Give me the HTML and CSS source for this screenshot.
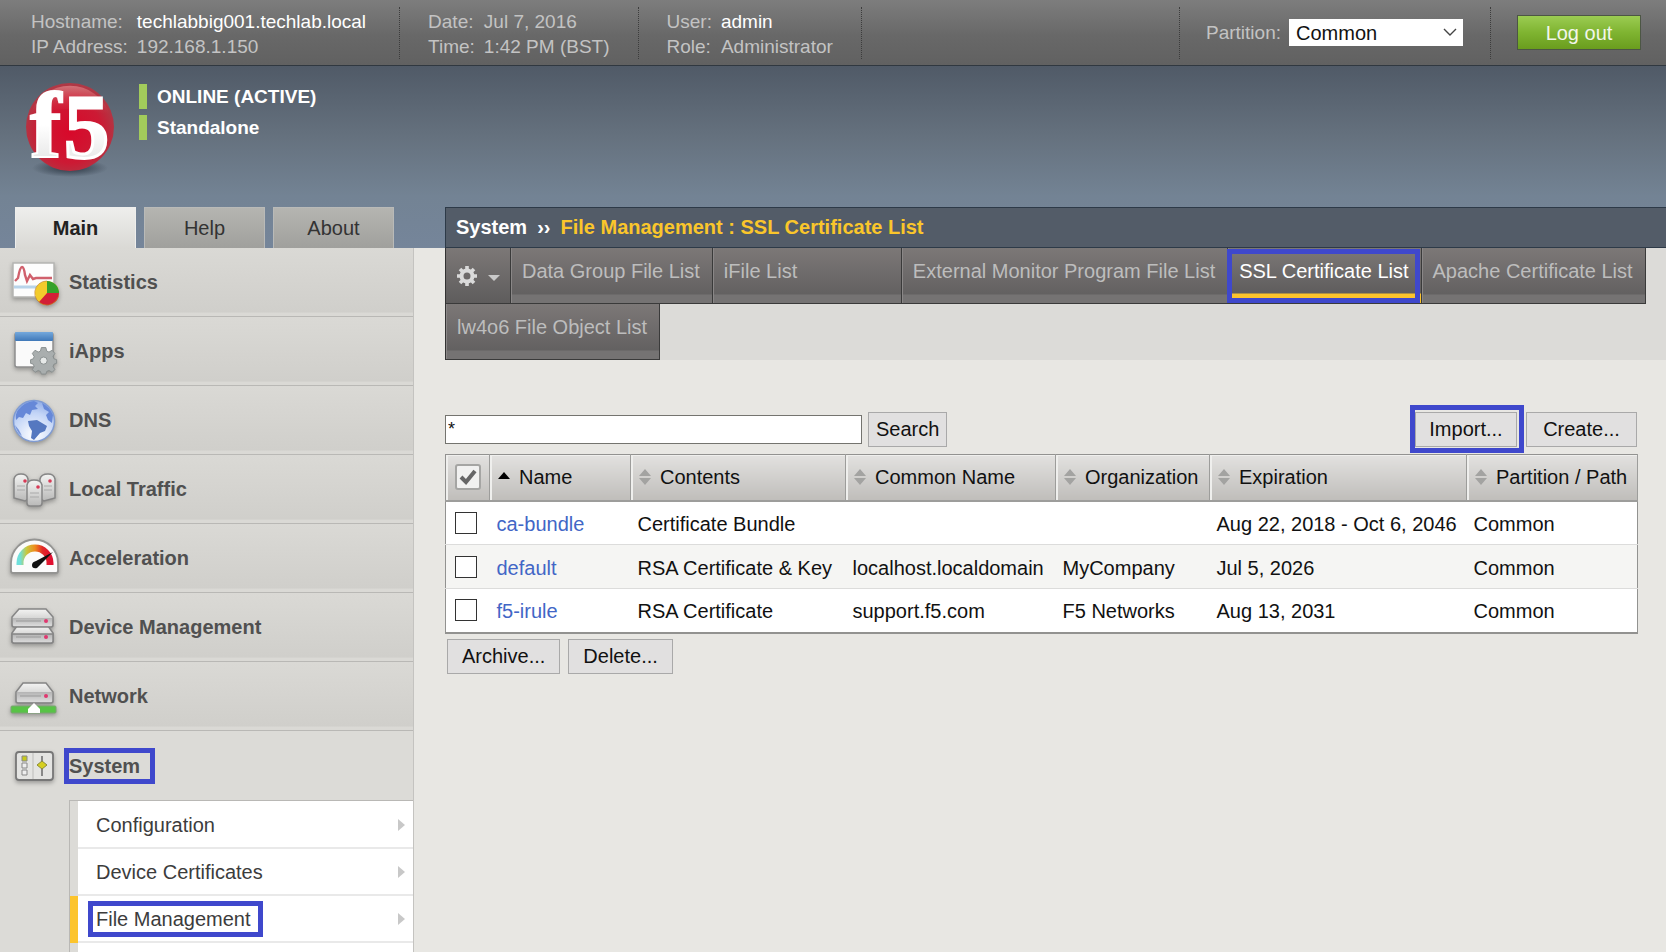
FILE: index.html
```html
<!DOCTYPE html>
<html lang="en">
<head>
<meta charset="utf-8">
<title>SSL Certificate List</title>
<link rel="stylesheet" href="styles.css">
</head>
<body>
<svg class="defs" width="0" height="0" aria-hidden="true">
  <defs>
    <linearGradient id="metal" x1="0" y1="0" x2="0" y2="1"><stop offset="0" stop-color="#f4f4f3"/><stop offset="1" stop-color="#b9b9b8"/></linearGradient>
    <linearGradient id="metalDark" x1="0" y1="0" x2="0" y2="1"><stop offset="0" stop-color="#b4b4b4"/><stop offset="1" stop-color="#dcdcdc"/></linearGradient>
    <linearGradient id="blueBar" x1="0" y1="0" x2="0" y2="1"><stop offset="0" stop-color="#74a8dc"/><stop offset="1" stop-color="#3f78b8"/></linearGradient>
    <linearGradient id="gauge" x1="0" y1="0" x2="1" y2="0"><stop offset="0" stop-color="#6fe0dc"/><stop offset=".22" stop-color="#c8c840"/><stop offset=".5" stop-color="#ef8a1c"/><stop offset=".75" stop-color="#e02a28"/><stop offset="1" stop-color="#e01030"/></linearGradient>
    <radialGradient id="globe" cx=".5" cy=".85" r=".9"><stop offset="0" stop-color="#ffffff"/><stop offset=".6" stop-color="#c3d5f7"/><stop offset="1" stop-color="#86a4e4"/></radialGradient>
    <radialGradient id="ball" cx=".5" cy=".55" r=".6"><stop offset="0" stop-color="#d8082a"/><stop offset=".6" stop-color="#cc1a34"/><stop offset="1" stop-color="#a4444c"/></radialGradient>
    <linearGradient id="gloss" x1="0" y1="0" x2="0" y2="1"><stop offset="0" stop-color="#e89a9a" stop-opacity=".6"/><stop offset="1" stop-color="#e03040" stop-opacity="0"/></linearGradient>
    <linearGradient id="letters" x1="0" y1="0" x2="0" y2="1"><stop offset=".5" stop-color="#ffffff"/><stop offset="1" stop-color="#dcdcdc"/></linearGradient>
    <radialGradient id="shade"><stop offset="0" stop-color="#222c38" stop-opacity=".9"/><stop offset="1" stop-color="#222c38" stop-opacity="0"/></radialGradient>
    <symbol id="sorter" viewBox="0 0 14 18"><path d="M7 1L13 8H1z M7 17L13 10H1z" fill="#a3a3a1"/></symbol>
  </defs>
</svg>

<header class="topbar">
  <dl class="info">
    <dt>Hostname:</dt><dd class="strong">techlabbig001.techlab.local</dd>
    <dt>IP Address:</dt><dd>192.168.1.150</dd>
  </dl>
  <dl class="info">
    <dt>Date:</dt><dd>Jul 7, 2016</dd>
    <dt>Time:</dt><dd>1:42 PM (BST)</dd>
  </dl>
  <dl class="info">
    <dt>User:</dt><dd class="strong">admin</dd>
    <dt>Role:</dt><dd>Administrator</dd>
  </dl>
  <div class="partition">
    <label for="partition">Partition:</label>
    <span class="select-wrap">
      <select id="partition"><option>Common</option></select>
      <svg class="chevron" width="14" height="9" viewBox="0 0 14 9"><path d="M1 1L7 7L13 1" fill="none" stroke="#444" stroke-width="1.4"/></svg>
    </span>
  </div>
  <div class="session"><button class="logout" type="button">Log out</button></div>
</header>

<div class="page">
  <aside class="side">
    <div class="brand">
      <svg class="logo" width="96" height="126" viewBox="0 -15 96 126" role="img" aria-label="f5">
        <ellipse cx="46" cy="87" rx="38" ry="9" fill="url(#shade)"/>
        <circle cx="46" cy="46" r="44" fill="url(#ball)"/>
        <path d="M6 34A42 42 0 0 1 86 34Q46 22 6 34z" fill="url(#gloss)"/>
        <g font-family="Liberation Serif, serif" font-weight="bold" fill="url(#letters)" stroke="#fff">
          <text x="6" y="76" font-size="94" stroke-width="2">f</text>
          <text x="40" y="77" font-size="90" stroke-width="3">5</text>
        </g>
      </svg>
      <div class="status">
        <p>ONLINE (ACTIVE)</p>
        <p>Standalone</p>
      </div>
    </div>
    <div class="side-tabs">
      <button class="side-tab current" type="button">Main</button>
      <button class="side-tab" type="button">Help</button>
      <button class="side-tab" type="button">About</button>
    </div>
    <nav class="menu">
      <a class="menu-row" href="#statistics">
        <svg class="ico" viewBox="0 0 48 48"><path d="M3 5H44V39H3z" fill="#fdfdfd" stroke="#b5b5b3" stroke-width="1.5"/><path d="M4 29H43" stroke="#b8d4ea" stroke-width="3"/><path d="M5 23L8 20Q10 9 12 9Q14 9 15 17L17 23L20 17L23 21L26 20H42" fill="none" stroke="#d0606c" stroke-width="2.4"/><circle cx="37" cy="35" r="12" fill="#f3cb2c"/><path d="M37 35V23A12 12 0 0 1 49 35z" fill="#35a12b"/><path d="M37 35H49A12 12 0 0 1 29 44z" fill="#d31f37"/><path d="M37 23A12 12 0 1 0 48 39" fill="none" stroke="#c07a20" stroke-width="1" opacity=".6"/></svg>
        <span>Statistics</span></a>
      <a class="menu-row" href="#iapps">
        <svg class="ico" viewBox="0 0 48 48"><rect x="5" y="6" width="38" height="34" rx="2" fill="#fafafa" stroke="#8e8e8e" stroke-width="1.5"/><rect x="5" y="5" width="38" height="9" rx="1" fill="url(#blueBar)"/><g transform="translate(3 3) scale(.9)" fill="#a9aeae" stroke="#858b8b" stroke-width="1"><path d="M31.5 19.500h5l1 4 2.500 1 3.500-2 3 3.500-2 3.500 1 2.500 3 1v4l-3 1-1 2.500 2 3.500-3 3-3.500-2-2.500 1-1 3h-5l-1-3-2.500-1-3.500 2-3-3 2-3.500-1-2.500-3-1v-4l3-1 1-2.500-2-3.500 3-3.500 3.500 2 2.500-1z"/><circle cx="34" cy="34" r="4" fill="#e6e9e8"/></g></svg>
        <span>iApps</span></a>
      <a class="menu-row" href="#dns">
        <svg class="ico" viewBox="0 0 48 48"><circle cx="24" cy="25" r="20.500" fill="url(#globe)" stroke="#7f9bd2" stroke-width="1.500"/><path d="M8 14Q14 6 24 5L28 7L25 10L28 13L22 14L20 19L16 17L13 22L9 21L6 24Q5 18 8 14z" fill="#6688d8"/><path d="M18 25L27 24L37 30L35 35L30 37L24 44L21 42L22 35L19 30z" fill="#5578c0"/><path d="M32 7Q40 11 43 19L42 27L38 24L36 19L39 16L34 13z" fill="#6688d8"/><path d="M5 29Q7 37 12 40Q9 33 5 29z" fill="#7896dc"/></svg>
        <span>DNS</span></a>
      <a class="menu-row" href="#local">
        <svg class="ico" viewBox="0 0 48 48"><g stroke="#868686" stroke-width="1.500"><path d="M4 14Q5 9 11 9Q17 9 18 14V34L15 36L4 33z" fill="url(#metal)"/><path d="M45 14Q44 9 38 9Q31 9 30 14V34L34 36L45 33z" fill="url(#metal)"/><path d="M17 20Q18 15 24 15Q31 15 32 20V38Q32 41 29 41H20Q17 41 17 38z" fill="url(#metal)"/></g><path d="M7 21H15M7 25H15M34 21H42M34 25H42M20 28H29M20 32H29" stroke="#aaa"/><g fill="#d83a56"><circle cx="15" cy="16" r="1.800"/><circle cx="40" cy="16" r="1.800"/><circle cx="28" cy="22" r="1.800"/></g></svg>
        <span>Local Traffic</span></a>
      <a class="menu-row" href="#acceleration">
        <svg class="ico" viewBox="0 0 48 48"><path d="M1 37V29A23.500 23.500 0 0 1 48 29V37Q48 39 46 39H3Q1 39 1 37z" fill="#fbfbfb" stroke="#949492" stroke-width="1.800"/><path d="M10 31V29A15 15 0 0 1 40 29V31" fill="none" stroke="url(#gauge)" stroke-width="7"/><path d="M43 18L27 34Q22 35 22 31Q22 28 26 27z" fill="#111"/></svg>
        <span>Acceleration</span></a>
      <a class="menu-row" href="#device">
        <svg class="ico" viewBox="0 0 48 48"><g stroke="#858585" stroke-width="1.500"><path d="M2 30L7 23H38L43 30V38Q43 40 41 40H4Q2 40 2 38z" fill="url(#metal)"/><path d="M2 31H43V38Q43 40 41 40H4Q2 40 2 38z" fill="url(#metalDark)"/><path d="M9 6H36L43 14V22Q43 24 41 24H4Q2 24 2 22V14z" fill="url(#metal)"/></g><path d="M3 15H42V22Q42 23 41 23H4Q3 23 3 22z" fill="url(#metalDark)"/><path d="M6 18H31M6 34H31" stroke="#999"/><circle cx="36" cy="18" r="2" fill="#e03870"/><circle cx="36" cy="34" r="2" fill="#e03870"/></svg>
        <span>Device Management</span></a>
      <a class="menu-row" href="#network">
        <svg class="ico" viewBox="0 0 48 48"><path d="M13 11H36L43 20V29Q43 31 41 31H8Q6 31 6 29V20z" fill="url(#metal)" stroke="#858585" stroke-width="1.500"/><path d="M7 20H42V29Q42 30 41 30H8Q7 30 7 29z" fill="url(#metalDark)"/><path d="M10 24H31" stroke="#999"/><circle cx="36" cy="24" r="2" fill="#e03870"/><rect x="1" y="34" width="45" height="7" rx="1" fill="#58c346" stroke="#7aa572"/><path d="M24 31L30 37V41H18V37z" fill="#fff"/></svg>
        <span>Network</span></a>
      <a class="menu-row open" href="#system">
        <svg class="ico" viewBox="0 0 48 48"><rect x="6" y="10" width="37" height="28" rx="3" fill="#e4e4e2" stroke="#777" stroke-width="1.800"/><path d="M23 11V37" stroke="#d0d0ce" stroke-width="2"/><path d="M12 14h5v5h-5z" fill="#c6c91c" stroke="#888"/><path d="M12 21h5v5h-5zM12 28h5v5h-5z" fill="#eee" stroke="#888"/><path d="M32 14V34" stroke="#888" stroke-width="2"/><path d="M32 19l5 4-5 4-5-4z" fill="#d6cf20" stroke="#8b8b3a"/></svg>
        <span class="marked">System</span></a>
      <ul class="submenu">
        <li><a href="#configuration"><span>Configuration</span></a></li>
        <li><a href="#certificates"><span>Device Certificates</span></a></li>
        <li class="active"><a href="#files"><span class="marked">File Management</span></a></li>
      </ul>
    </nav>
  </aside>

  <main class="main">
    <h1 class="crumb"><span>System</span><span class="sep">››</span><span class="where">File Management : SSL Certificate List</span></h1>
    <nav class="tabs">
      <button class="gear" type="button" aria-label="Options">
        <svg width="44" height="22" viewBox="0 0 44 22"><g fill="none" stroke="#dadada"><circle cx="11" cy="11" r="5.500" stroke-width="4"/><g stroke-width="3.600"><path d="M11 1V5M11 17V21M1 11H5M17 11H21M4 4L7 7M15 15L18 18M4 18L7 15M15 7L18 4"/></g></g><path d="M32 10H44L38 16z" fill="#c9c9c9"/></svg>
      </button>
      <a class="tab" href="#data-group">Data Group File List</a>
      <a class="tab ifile" href="#ifile">iFile List</a>
      <a class="tab" href="#monitor">External Monitor Program File List</a>
      <a class="tab current" href="#ssl">SSL Certificate List</a>
      <a class="tab" href="#apache">Apache Certificate List</a>
      <a class="tab" href="#lw4o6">lw4o6 File Object List</a>
    </nav>

    <section class="content">
      <form class="tools">
        <input class="query" type="text" value="*" aria-label="Filter">
        <button class="btn search" type="button">Search</button>
        <span class="actions">
          <span class="import-box"><button class="btn import" type="button">Import...</button></span>
          <button class="btn create" type="button">Create...</button>
        </span>
      </form>
      <table class="list">
        <colgroup><col class="c-check"><col class="c-name"><col class="c-contents"><col class="c-common"><col class="c-org"><col class="c-exp"><col class="c-path"></colgroup>
        <thead>
          <tr>
            <th><label class="all"><input type="checkbox" aria-label="Select all"><svg width="18" height="18" viewBox="0 0 18 18"><path d="M2 9L7 14L16 3" fill="none" stroke="#666" stroke-width="4"/></svg></label></th>
            <th><span class="head"><svg width="14" height="18" viewBox="0 0 14 18"><path d="M7 4L13 11H1z" fill="#000"/></svg>Name</span></th>
            <th><span class="head"><svg width="14" height="18"><use href="#sorter"/></svg>Contents</span></th>
            <th><span class="head"><svg width="14" height="18"><use href="#sorter"/></svg>Common Name</span></th>
            <th><span class="head"><svg width="14" height="18"><use href="#sorter"/></svg>Organization</span></th>
            <th><span class="head"><svg width="14" height="18"><use href="#sorter"/></svg>Expiration</span></th>
            <th><span class="head"><svg width="14" height="18"><use href="#sorter"/></svg>Partition / Path</span></th>
          </tr>
        </thead>
        <tbody>
          <tr><td><input class="pick" type="checkbox" aria-label="ca-bundle"></td><td><a href="#ca-bundle">ca-bundle</a></td><td>Certificate Bundle</td><td></td><td></td><td>Aug 22, 2018 - Oct 6, 2046</td><td>Common</td></tr>
          <tr><td><input class="pick" type="checkbox" aria-label="default"></td><td><a href="#default">default</a></td><td>RSA Certificate &amp; Key</td><td>localhost.localdomain</td><td>MyCompany</td><td>Jul 5, 2026</td><td>Common</td></tr>
          <tr><td><input class="pick" type="checkbox" aria-label="f5-irule"></td><td><a href="#f5-irule">f5-irule</a></td><td>RSA Certificate</td><td>support.f5.com</td><td>F5 Networks</td><td>Aug 13, 2031</td><td>Common</td></tr>
        </tbody>
      </table>
      <div class="below">
        <button class="btn" type="button">Archive...</button>
        <button class="btn" type="button">Delete...</button>
      </div>
    </section>
  </main>
</div>
</body>
</html>
```

FILE: styles.css
```css
* { box-sizing: border-box; }
body {
  margin: 0;
  min-height: 100vh;
  display: flex;
  flex-direction: column;
  background: #e8e7e3;
  color: #111;
  font: 20px/24px "Liberation Sans", Arial, sans-serif;
}
button, input, select { font: inherit; color: inherit; margin: 0; }
a { color: inherit; text-decoration: none; }
.defs { position: absolute; }

/* top bar */
.topbar {
  display: flex;
  align-items: center;
  height: 66px;
  background: linear-gradient(#7d7d7d, #686868 55%, #616161);
  border-bottom: 1px solid #303840;
  color: #c3c3c3;
}
.info {
  display: grid;
  grid-template-columns: auto auto;
  column-gap: 9px;
  align-content: center;
  height: 52px;
  margin: 0;
  padding: 2px 28px 0 28px;
  border-right: 1px dotted #3c3c3c;
  font-size: 19px;
  line-height: 25px;
}
.info:first-child { padding: 2px 33px 0 31px; }
.info dd { margin: 0; }
.info .strong { color: #fff; }
.partition {
  display: flex;
  align-items: center;
  gap: 8px;
  height: 52px;
  margin-left: auto;
  padding: 0 27px 0 26px;
  border-left: 1px dotted #3c3c3c;
  border-right: 1px dotted #3c3c3c;
}
.partition label { font-size: 19px; }
.select-wrap { position: relative; display: block; }
.select-wrap select {
  display: block;
  width: 174px;
  height: 27px;
  padding: 0 7px;
  border: 0;
  border-radius: 0;
  appearance: none;
  background: #fff;
  color: #111;
}
.chevron { position: absolute; right: 6px; top: 9px; pointer-events: none; }
.session { padding: 0 25px 0 26px; }
.logout {
  display: block;
  width: 124px;
  height: 35px;
  padding: 0;
  border: 1px solid #4c5644;
  background: linear-gradient(#9bcc52, #7fb431 50%, #6a9d1e);
  color: #f2f6ea;
}

/* page frame */
.page {
  flex: 1;
  display: grid;
  grid-template-columns: 445px minmax(0, 1fr);
  background: linear-gradient(#505a67, #65717e 70px, #738394 130px, #75859a 182px, transparent 182px);
}
.side { display: flex; flex-direction: column; }
.brand { display: flex; height: 141px; padding: 0 0 0 24px; gap: 19px; }
.status { display: flex; flex-direction: column; gap: 6px; padding-top: 18px; }
.status p {
  margin: 0;
  padding-left: 10px;
  border-left: 8px solid #a2cb5b;
  color: #fff;
  font-weight: bold;
  font-size: 19px;
  line-height: 25px;
}
.side-tabs { display: flex; gap: 8px; padding-left: 15px; }
.side-tab {
  width: 121px;
  height: 41px;
  padding: 0;
  border: 1px solid #b9bab8;
  border-bottom: 0;
  background: linear-gradient(#b5b5b1, #a0a09d);
  color: #333;
}
.side-tab.current { background: linear-gradient(#eeeeec, #dad9d5); border-color: #eeeeec; font-weight: bold; color: #222; }

/* side menu */
.menu {
  flex: 1;
  display: flex;
  flex-direction: column;
  width: 414px;
  border-right: 1px solid #c4c3c0;
  background: #dcdbd7;
}
.menu-row {
  display: flex;
  align-items: center;
  gap: 11px;
  height: 69px;
  padding-left: 10px;
  border-bottom: 1px solid #b9b8b5;
  background: linear-gradient(#dad9d5, #d0cfcb 94%, #dad9d5 96%);
  color: #505050;
  font-weight: bold;
}
.menu-row.open { border-bottom: 0; background: none; }
.ico { width: 48px; height: 48px; overflow: visible; filter: drop-shadow(0 2px 2px rgba(0, 0, 0, .3)); }
.marked { position: relative; }
.marked::after {
  content: "";
  position: absolute;
  inset: -6px -15px -6px -5px;
  border: 5px solid #3f48cc;
}
.submenu {
  flex: 1;
  margin: 0 0 0 69px;
  padding: 1px 0 0;
  border: 1px solid #b9b8b5;
  border-width: 1px 0 0 1px;
  background: linear-gradient(90deg, #dcdbd7 8px, #fff 8px);
  list-style: none;
}
.submenu li { border-left: 8px solid transparent; }
.submenu .active { border-color: #fcc42c; }
.submenu a {
  display: flex;
  align-items: center;
  justify-content: space-between;
  height: 47px;
  padding: 0 8px 0 18px;
  border-bottom: 2px solid #e9e9e9;
  color: #3c3c3c;
}
.submenu a::after {
  content: "";
  border: 6px solid transparent;
  border-left: 7px solid #c8c8c8;
  border-right: 0;
}
.submenu .marked::after { inset: -6px -12px -6px -8px; }

/* main column */
.main { padding-top: 141px; }
.crumb {
  display: flex;
  gap: 10px;
  height: 41px;
  margin: 0;
  padding: 0 10px;
  border: 1px solid #2d3a48;
  border-right: 0;
  background: #535c68;
  color: #fff;
  font-size: 20px;
  line-height: 38px;
}
.crumb .where { color: #fac62b; }
.tabs {
  display: flex;
  flex-wrap: wrap;
  background: #dcdbd8;
  border-left: 1px solid #333;
}
.tab, .gear {
  height: 56px;
  border: solid #3a3a3a;
  border-width: 0 1px 1px 0;
  background: linear-gradient(#7c7877, #636161 46px, #757373 47px);
  color: #bdbdbd;
}
.tab { padding: 11px 12px 0 11px; position: relative; box-shadow: inset 1px 0 #8a8787; }
.tab.ifile { width: 189px; }
.tab.current { color: #fff; background: linear-gradient(#7c7877, #5f5d5d 45px, #fcc42c 46px); }
.tab.current::after {
  content: "";
  position: absolute;
  inset: 1px 1px 0 -1px;
  border: 5px solid #3f48cc;
}
.gear { width: 65px; padding: 0; background: linear-gradient(#7c7877, #5e5c5c); }
.gear svg { display: block; margin: 0 auto; }

/* list */
.content { padding: 45px 28px 0 0; }
.tools { display: flex; align-items: center; height: 48px; margin-bottom: 1px; }
.query {
  width: 417px;
  height: 29px;
  margin-right: 6px;
  padding: 0 2px;
  border: 1px solid #74746f;
  border-radius: 0;
  background: #fff;
  font-size: 18px;
}
.btn {
  height: 35px;
  padding: 0 14px;
  border: 1px solid #a9a9a9;
  background: #e1e0e0;
}
.btn.search { padding: 0 7px; }
.actions { display: flex; align-items: center; gap: 2px; margin-left: auto; padding-right: 1px; }
.import-box { display: flex; align-items: center; height: 48px; padding-right: 2px; border: 5px solid #3f48cc; }
.btn.import { width: 102px; padding: 0; }
.btn.create { width: 111px; padding: 0; }
.list {
  width: 100%;
  border-collapse: collapse;
  border: 1px solid #929290;
  border-bottom-width: 2px;
  background: #fff;
  table-layout: fixed;
  white-space: nowrap;
}
.c-check { width: 44px; }
.c-name { width: 141px; }
.c-contents { width: 215px; }
.c-common { width: 210px; }
.c-org { width: 154px; }
.c-exp { width: 257px; }
.c-path { width: 171px; }
.list th {
  height: 46px;
  padding: 0 0 0 7px;
  border: solid #9d9d9b;
  border-width: 0 1px 2px 0;
  background: linear-gradient(#e2e1df, #bfbdba);
  box-shadow: inset 2px 1px #efefed;
  font-weight: normal;
  text-align: left;
}
.list td { height: 44px; padding: 2px 0 0 7px; border-top: 1px solid #dcdcdb; }
.list tbody tr:nth-child(even) { background: #f5f5f3; }
.list td a { color: #4266c6; }
.head { display: flex; align-items: center; gap: 8px; }
.all {
  display: flex;
  align-items: center;
  justify-content: center;
  width: 26px;
  height: 26px;
  border: 2px solid #a5a5a3;
  border-radius: 3px;
  background: #f1f1f0;
}
.all input { position: absolute; opacity: 0; }
.pick {
  display: block;
  width: 22px;
  height: 22px;
  appearance: none;
  border: 1px solid #333;
  background: #fff;
}
.list th:first-child, .list td:first-child { padding: 0 0 0 9px; }
.below { display: flex; gap: 8px; padding: 5px 0 0 2px; }
```
